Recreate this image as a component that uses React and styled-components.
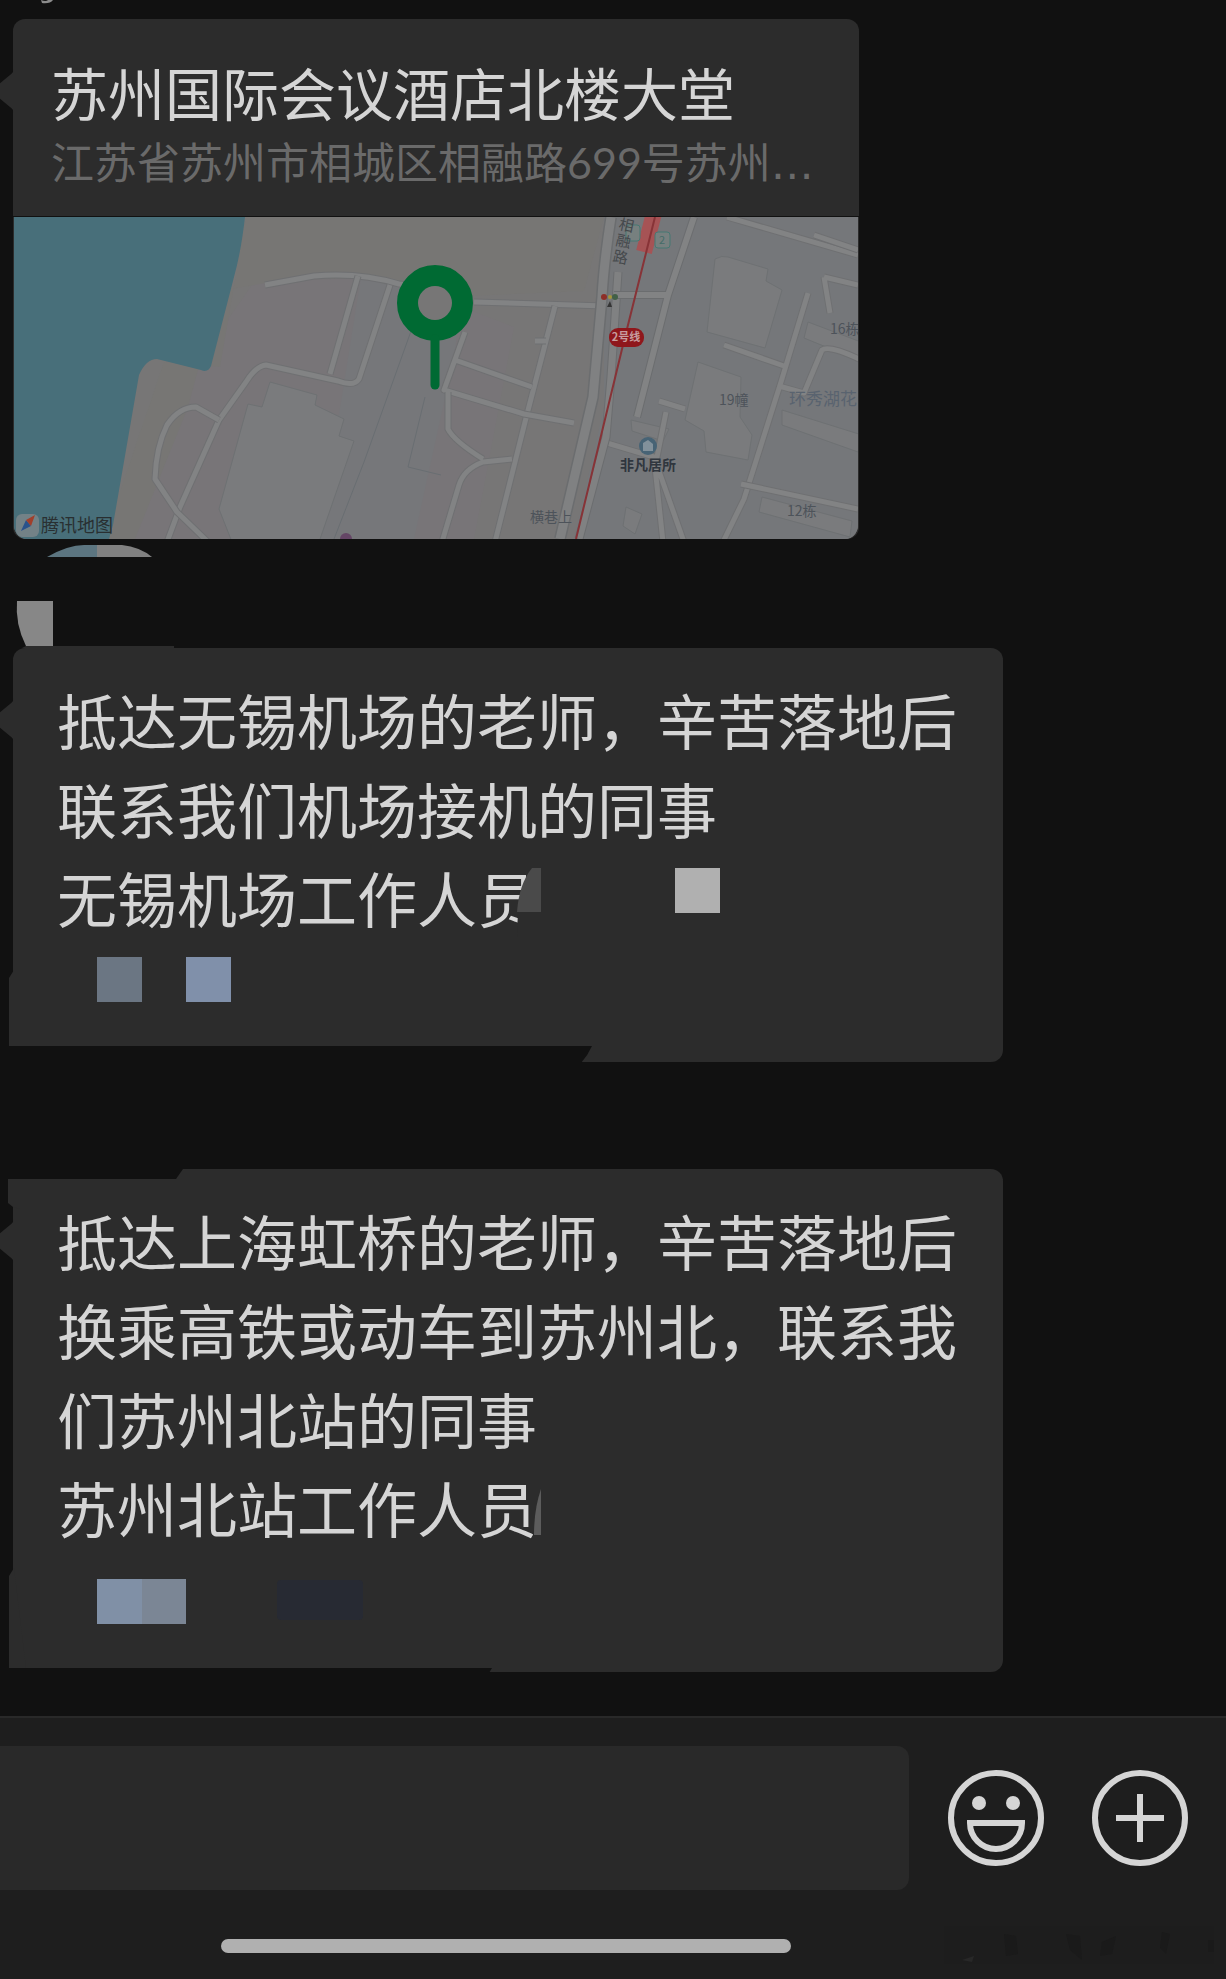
import React from "react";
import styled, { createGlobalStyle } from "styled-components";

const Global = createGlobalStyle`
  * { box-sizing: border-box; }
  body {
    margin: 0;
    background: #111;
    color: #d5d5d5;
    font-family: "Noto Sans CJK SC", sans-serif;
    overflow-x: hidden;
  }
`;

const Screen = styled.div`
  min-height: 100vh;
  display: flex;
  flex-direction: column;
  overflow: hidden;
`;

const Thread = styled.main`
  flex: 1;
  display: flex;
  flex-direction: column;
  align-items: flex-start;
  padding: 0 13px 43px;
`;

const SenderTail = styled.svg`
  display: block;
  width: 14px;
  height: 4px;
  margin: 0 0 15px 28px;
`;

const Tail = styled.svg`
  position: absolute;
  left: -22px;
  top: 50px;
  width: 23px;
  height: 44px;
`;

const Card = styled.a`
  position: relative;
  display: block;
  width: 846px;
  max-width: 100%;
  border-radius: 12px;
  background: #2c2c2c;
  color: inherit;
  text-decoration: none;
`;

const CardText = styled.div`
  padding: 36px 38px 17px;
  border-bottom: 1px solid #111;
`;

const CardTitle = styled.h2`
  margin: 0;
  font-size: 57px;
  font-weight: 400;
  line-height: 72px;
  white-space: nowrap;
`;

const CardAddress = styled.p`
  margin: 0;
  color: #6a6a6a;
  font-family: Lato, "Noto Sans CJK SC", sans-serif;
  font-size: 43px;
  line-height: 72px;
  white-space: nowrap;
`;

const Ellipsis = styled.span`
  font-family: "DejaVu Sans", sans-serif;
  line-height: 1;
`;

const MapView = styled.svg`
  display: block;
  width: 100%;
  height: auto;
  padding: 0 1px;
  border-radius: 0 0 14px 14px;
  overflow: hidden;
`;

const Fragments = styled.svg`
  display: block;
  width: 180px;
  height: 109px;
  margin-left: -13px;
`;

const Bubble = styled.article`
  position: relative;
  width: 990px;
  max-width: 100%;
  margin-bottom: ${(p) => p.$gap || 0}px;
  padding: 26px 42px 32px 44px;
  border-radius: 12px;
  background: #2c2c2c;
`;

const Line = styled.p`
  margin: 0;
  min-height: 89px;
  font-size: 60px;
  line-height: 89px;
`;

const Cover = styled.svg`
  position: absolute;
  left: -13px;
  top: 0;
  width: 760px;
  height: 100%;
  overflow: visible;
`;

const Composer = styled.footer`
  border-top: 2px solid #292929;
  background: #1e1e1e;
`;

const ComposerRow = styled.form`
  display: flex;
  align-items: center;
  gap: 48px;
  padding: 28px 38px 0 0;
`;

const MessageInput = styled.input`
  flex: 1;
  min-width: 0;
  height: 144px;
  margin-right: -9px;
  padding: 0 32px;
  border: 0;
  border-radius: 0 12px 12px 0;
  background: #292929;
  color: #d5d5d5;
  font: inherit;
  font-size: 57px;
  outline: 0;
`;

const IconButton = styled.button`
  flex: none;
  width: 96px;
  height: 96px;
  padding: 0;
  border: 0;
  background: none;
  color: #d5d5d5;

  svg { display: block; }
`;

const HomeArea = styled.div`
  display: flex;
  align-items: center;
  justify-content: space-between;
  height: 89px;
  padding: 22px 10px 0 18%;
`;

const HomeBar = styled.div`
  width: 570px;
  height: 14px;
  border-radius: 7px;
  background: #b0b0b0;
`;

const Smudge = styled.svg`
  width: 272px;
  height: 40px;
`;

function BubbleTail() {
  return (
    <Tail viewBox="0 0 23 44" aria-hidden="true">
      <path d="M23 0Q23 3 19 6L2 20Q0 22 2 24L19 38Q23 41 23 44Z" fill="#2c2c2c" />
    </Tail>
  );
}

const roads = [
  "M251 68L300 59Q345 55 385 67L430 72",
  "M344 59L316 157M376 68L345 162Q340 170 324 164L252 148Q242 149 232 165L205 203L166 290L153 325",
  "M205 203L182 190Q165 190 153 208Q142 230 141 262L163 295L194 325",
  "M460 85L591 89",
  "M541 89L511 205L481 325",
  "M451 115L430 173L510 197L560 206M441 143L518 170",
  "M434 175L434 212Q440 224 469 242M498 242L469 245Q450 252 445 268L428 325",
  "M521 124L532 124",
  "M710 128L770 149M794 76L767 165L730 282L709 325M765 169L790 176L808 133Q815 128 845 142",
  "M727 267L844 292M713 0L844 38M645 184L671 192M593 226L640 240L670 325M652 195L641 250L649 325",
  "M800 18L844 33M810 60L816 96M810 60L844 68",
];

const blocks = [
  "M234 187L248 190L256 165L303 178L301 188L330 202L325 219L340 224L305 325L218 325L205 292Z",
  "M701 42Q708 38 714 40L754 52L752 64L768 73L751 131L693 115Z",
  "M684 145L727 160L726 200L738 218L734 243L692 235L690 214L671 203Z",
  "M768 193L848 218L844 235L768 208Z",
  "M794 105L847 125L844 143L790 121Z",
  "M748 280L838 304L836 320L745 295Z",
  "M617 203L655 212L649 224L618 214Z",
  "M612 290L628 297L621 317L609 309Z",
];

function MapPicture() {
  return (
    <MapView viewBox="0 0 844 322" role="img" aria-label="地图">
      <rect width="844" height="322" fill="#777676" />
      <path d="M240 65L370 60L500 110L460 322L100 322L160 180Z" fill="#787578" />
      <path d="M590 0H844V322H560L590 190Z" fill="#75777a" />
      <path d="M232 0H590L570 74L452 79L372 62L300 58L205 74L174 190L121 322H90L150 145L206 150Z" fill="#777674" />
      <path d="M347 60L390 70L446 95L440 140L400 322H305Z" fill="#76777a" />
      <path d="M0 0H231Q227 35 220 60L197 149Q194 156 187 153L143 142Q132 142 125 158L99 308L95 322H0Z" fill="#486f7a" />
      {blocks.map((d) => (
        <path key={d} d={d} fill="#7a7b7d" stroke="#6e7173" strokeWidth="1" />
      ))}
      <path d="M401 103L350 245L320 322M411 180L394 250L427 258" fill="none" stroke="#696e72" strokeWidth="1" />
      {roads.map((d) => (
        <g key={d} fill="none" strokeLinejoin="round">
          <path d={d} stroke="#6f7072" strokeWidth="7" />
          <path d={d} stroke="#828384" strokeWidth="5" />
        </g>
      ))}
      <g fill="none">
        <path d="M597 0Q590 45 588 80L579 180L546 322" stroke="#6b6d6f" strokeWidth="12" />
        <path d="M597 0Q590 45 588 80L579 180L546 322" stroke="#808182" strokeWidth="9" />
        <path d="M604 55L597 160L592 220L565 322" stroke="#6b6d6f" strokeWidth="9" />
        <path d="M604 55L597 160L592 220L565 322" stroke="#808182" strokeWidth="7" />
        <path d="M680 0L654 78L623 200M600 78H655" stroke="#6b6d6f" strokeWidth="8" />
        <path d="M680 0L654 78L623 200M600 78H655" stroke="#828384" strokeWidth="6" />
        <path d="M640 -4L630 35" stroke="#a65355" strokeWidth="16" />
        <path d="M641 0L609 128L562 322" stroke="#873337" strokeWidth="2" />
      </g>
      <g fill="#77807f" stroke="#477873" strokeWidth="1">
        <rect x="612" y="8" width="14" height="16" rx="3" />
        <rect x="641" y="15" width="15" height="16" rx="3" />
      </g>
      <text x="645" y="27" fill="#456c68" fontSize="11">2</text>
      <g fill="#45494c" fontSize="15">
        <text transform="translate(604 12) rotate(12)">相</text>
        <text transform="translate(601 28) rotate(12)">融</text>
        <text transform="translate(598 44) rotate(12)">路</text>
      </g>
      <g>
        <circle cx="590" cy="80" r="3" fill="#8d2e28" />
        <circle cx="596" cy="80" r="2" fill="#a39538" />
        <circle cx="601" cy="80" r="3" fill="#426048" />
        <path d="M593 90L596 84L598 90Z" fill="#343434" />
      </g>
      <rect x="595" y="111" width="35" height="19" rx="9" fill="#8f171c" />
      <text x="612" y="124" fill="#c79d9e" fontSize="11" fontWeight="700" textAnchor="middle">2号线</text>
      <circle cx="634" cy="229" r="9" fill="#476375" />
      <path d="M629 234V226L634 223L639 227V234Z" fill="#82919b" />
      <text x="634" y="253" fill="#30363e" fontSize="14" fontWeight="700" textAnchor="middle">非凡居所</text>
      <g fill="#4d535a" fontSize="14">
        <text x="516" y="305">横巷上</text>
        <text x="705" y="188">19幢</text>
        <text x="816" y="117">16栋</text>
        <text x="773" y="299">12栋</text>
      </g>
      <text x="775" y="188" fill="#59636f" fontSize="17">环秀湖花</text>
      <path d="M326 322A5 5 0 0 1 338 322Z" fill="#654666" />
      <circle cx="421" cy="86" r="27" fill="none" stroke="#006a33" strokeWidth="22" />
      <path d="M421 122V168" stroke="#006a33" strokeWidth="9" strokeLinecap="round" />
      <circle cx="421" cy="86" r="17" fill="#777676" />
      <rect x="2" y="297" width="23" height="23" rx="6" fill="#738287" />
      <path d="M7 314L12 303L17 309Z" fill="#29528b" />
      <path d="M21 298L12 303L17 309Z" fill="#a13f2b" />
      <text x="27" y="315" fill="#292f31" fontSize="18">腾讯地图</text>
    </MapView>
  );
}

function SmileIcon() {
  return (
    <svg width="96" height="96" viewBox="0 0 96 96" fill="none" stroke="currentColor" strokeWidth="6">
      <circle cx="48" cy="48" r="45" />
      <path d="M22 53H74A26 26 0 0 1 22 53Z" />
      <circle cx="31" cy="33" r="7" fill="currentColor" stroke="none" />
      <circle cx="65" cy="33" r="7" fill="currentColor" stroke="none" />
    </svg>
  );
}

function PlusIcon() {
  return (
    <svg width="96" height="96" viewBox="0 0 96 96" fill="none" stroke="currentColor" strokeWidth="6">
      <circle cx="48" cy="48" r="45" />
      <path d="M48 24V72M24 48H72" />
    </svg>
  );
}

export default function App() {
  return (
    <Screen>
      <Global />
      <Thread>
        <SenderTail viewBox="0 0 14 4" aria-hidden="true">
          <path d="M0 0Q5 2 7 0H12Q9 4 1 3Z" fill="#8c8c8c" />
        </SenderTail>
        <Card href="#map">
          <BubbleTail />
          <CardText>
            <CardTitle>苏州国际会议酒店北楼大堂</CardTitle>
            <CardAddress>
              江苏省苏州市相城区相融路699号苏州<Ellipsis>…</Ellipsis>
            </CardAddress>
          </CardText>
          <MapPicture />
        </Card>

        <Fragments viewBox="0 0 180 109" aria-hidden="true">
          <path d="M47 18Q68 6 84 6H97V18Z" fill="#5c7580" />
          <path d="M97 6H122Q140 8 152 18H97Z" fill="#818181" />
          <path d="M17 62H53V107H26Q15 85 17 62Z" fill="#878787" />
          <path d="M26 107H174V109H22Z" fill="#2c2c2c" />
        </Fragments>

        <Bubble $gap={107}>
          <BubbleTail />
          <Line>抵达无锡机场的老师，辛苦落地后</Line>
          <Line>联系我们机场接机的同事</Line>
          <Line>无锡机场工作人员</Line>
          <Line />
          <Cover aria-hidden="true">
            <path d="M14 322L9 330V398H14Z" fill="#2c2c2c" />
            <path d="M9 398H592Q588 407 581 415H9Z" fill="#111" />
            <path d="M532 220H550V290H517Q517 240 532 220Z" fill="#2c2c2c" />
            <path d="M532 220H541V264H517Q519 236 532 220Z" fill="#4a4a4a" />
            <rect x="675" y="220" width="45" height="45" fill="#b0b0b0" />
            <rect x="97" y="309" width="45" height="45" fill="#6b7683" />
            <rect x="186" y="309" width="45" height="45" fill="#8090aa" />
          </Cover>
        </Bubble>

        <Bubble>
          <BubbleTail />
          <Line>抵达上海虹桥的老师，辛苦落地后换乘高铁或动车到苏州北，联系我们苏州北站的同事</Line>
          <Line>苏州北站工作人员</Line>
          <Line />
          <Cover aria-hidden="true">
            <path d="M8 0H183L176 10H8Z" fill="#111" />
            <path d="M8 10H20V40L13 38L8 34Z" fill="#2c2c2c" />
            <path d="M14 399L9 407V499H26Z" fill="#2c2c2c" />
            <path d="M9 499H492L489 504H9Z" fill="#111" />
            <path d="M541 320V366H534Q534 340 541 320Z" fill="#5c5c5c" />
            <rect x="97" y="410" width="45" height="45" fill="#8090a6" />
            <rect x="142" y="410" width="44" height="45" fill="#7b8695" />
            <rect x="277" y="411" width="86" height="40" rx="4" fill="#272a33" />
          </Cover>
        </Bubble>
      </Thread>

      <Composer>
        <ComposerRow>
          <MessageInput type="text" aria-label="消息" />
          <IconButton type="button" aria-label="表情"><SmileIcon /></IconButton>
          <IconButton type="button" aria-label="更多"><PlusIcon /></IconButton>
        </ComposerRow>
        <HomeArea>
          <HomeBar />
          <Smudge viewBox="0 0 272 40" aria-hidden="true">
            <rect width="270" height="38" fill="#1d1d1d" />
            <path d="M60 8L72 10L74 28L62 30ZM122 8L136 10L138 34L126 24ZM158 16L172 10L168 28L156 30ZM218 6L226 8L222 28L216 22ZM264 14H270V26H264Z" fill="#1a1a1a" />
            <path d="M18 34L30 30L28 36Z" fill="#282828" />
          </Smudge>
        </HomeArea>
      </Composer>
    </Screen>
  );
}
